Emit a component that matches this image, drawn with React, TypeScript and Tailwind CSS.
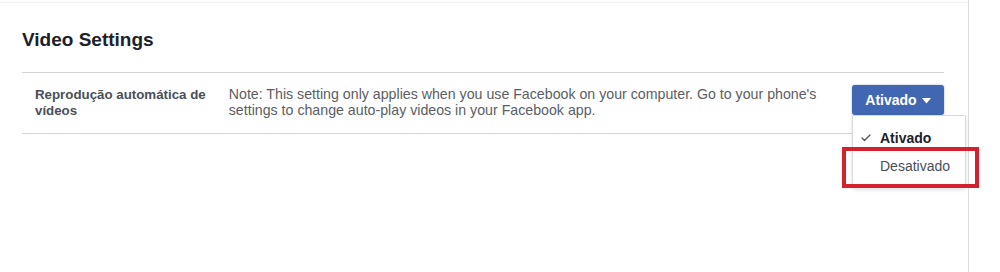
import { Check } from 'lucide-react';

function Caret() {
  return (
    <svg width="9" height="6" viewBox="0 0 9 6" className="ml-[5px] mt-[1px]">
      <path d="M0 0 L9 0 L4.5 5.5 Z" fill="#fff" />
    </svg>
  );
}

export default function App() {
  return (
    <div
      className="flex h-[272px] w-[1000px] overflow-hidden bg-white"
      style={{ fontFamily: '"Liberation Sans", Arial, sans-serif' }}
    >
      <div className="relative h-full w-[969px] border-r border-[#dcdcdc]">
        <div className="h-[3px] border-b border-[#f0f0f0]" />
        <div className="px-[22px]">
          <h1 className="mt-[27px] text-[19px] font-bold leading-[20px] text-[#1d2129]">
            Video Settings
          </h1>
          <div className="mt-[22px] flex h-[62px] w-[922px] border-y border-[#d5d5d5]">
            <div className="w-[207px] pl-[13px] pt-[14px] text-[13.3px] font-bold leading-[16px] text-[#4b4f56]">
              Reprodução automática de vídeos
            </div>
            <div className="w-[611px] pt-[13px] text-[14.2px] leading-[16px] text-[#5b5e63]">
              Note: This setting only applies when you use Facebook on your computer. Go to your phone&apos;s settings to change auto-play videos in your Facebook app.
            </div>
            <div className="relative pl-[13px] pt-[12px]">
              <button className="flex h-[30px] w-[92px] items-center justify-center rounded-[3px] bg-[#4267b2] text-[14px] font-bold text-white shadow-[0_0_2px_rgba(66,103,178,0.6)]">
                Ativado
                <Caret />
              </button>
              <div className="absolute left-[13px] top-[42px] w-[114px] rounded-b-[3px] border border-[#d6d9dd] bg-white pb-[6px] pt-[9px] shadow-[0_2px_4px_rgba(0,0,0,0.12)]">
                <div className="flex h-[26px] items-center text-[14px] font-bold text-[#1d2129]">
                  <Check size={12} strokeWidth={2.5} className="ml-[7px] mr-[8px] text-[#4b4f56]" />
                  Ativado
                </div>
                <div className="flex h-[30px] items-center pl-[27px] text-[14px] text-[#4b4f56]">
                  Desativado
                </div>
              </div>
              <div className="absolute left-[3px] top-[74px] h-[41px] w-[137px] border-[4px] border-[#d2222d]" />
            </div>
          </div>
        </div>
      </div>
    </div>
  );
}
